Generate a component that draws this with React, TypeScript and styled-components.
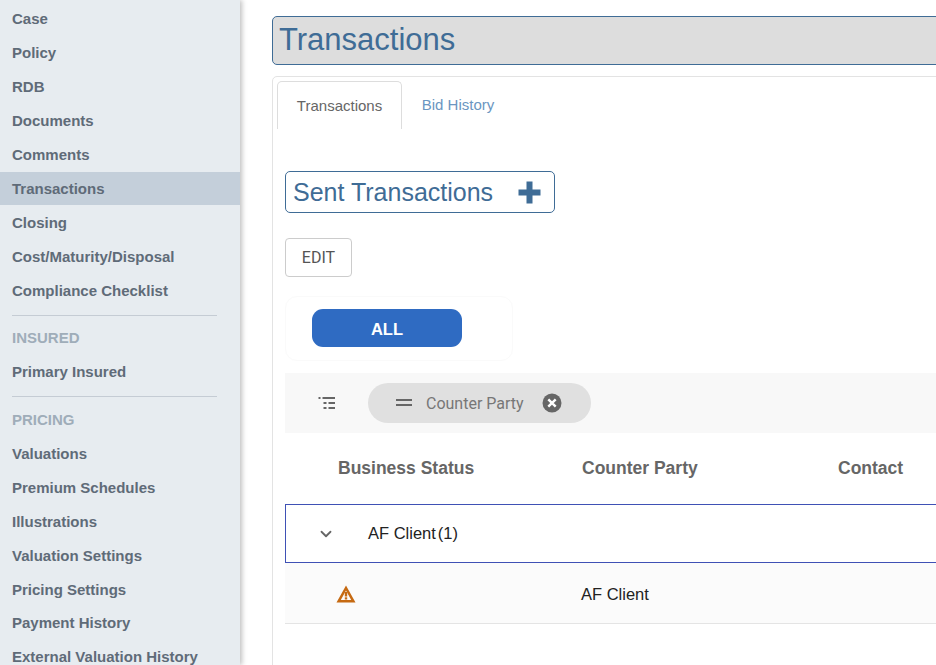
import React from "react";
import styled, { createGlobalStyle } from "styled-components";
import { ChevronDown } from "lucide-react";

const GlobalStyle = createGlobalStyle`
  html, body {
    margin: 0;
    padding: 0;
    background: white;
    font-family: "Liberation Sans", Arial, sans-serif;
  }
`;

const Page = styled.div`
  display: flex;
  width: 936px;
  height: 665px;
  overflow: hidden;
  background: white;
`;

const Sidebar = styled.nav`
  flex: 0 0 240px;
  height: 665px;
  padding-top: 2px;
  box-sizing: border-box;
  overflow: hidden;
  background: #e7ecf0;
  box-shadow: 2px 0 5px rgba(0, 0, 0, 0.25);
  position: relative;
  z-index: 1;
`;

const NavItem = styled.div<{ $active?: boolean; $h?: number }>`
  height: ${({ $active, $h }) => ($active ? 33 : $h || 34)}px;
  margin-bottom: ${({ $active }) => ($active ? 1 : 0)}px;
  line-height: 33px;
  padding-left: 12px;
  font-size: 15px;
  font-weight: 700;
  color: #5f6b78;
  background: ${({ $active }) => ($active ? "#c4cfda" : "transparent")};
`;

const NavDivider = styled.hr<{ $after: number }>`
  border: 0;
  height: 1px;
  background: #c5ccd4;
  margin: 7px 23px ${({ $after }) => $after}px 12px;
`;

const NavSection = styled.div`
  height: 34px;
  line-height: 33px;
  padding-left: 12px;
  font-size: 15px;
  font-weight: 700;
  color: #9fadb9;
`;

const Main = styled.main`
  flex: 0 0 760px;
  padding: 16px 0 0 32px;
  box-sizing: border-box;
`;

const TitleBar = styled.h1`
  margin: 0 0 11px;
  height: 49px;
  line-height: 46px;
  box-sizing: border-box;
  padding-left: 6px;
  font-size: 31px;
  font-weight: 400;
  color: #3f6c96;
  background: #dddddd;
  border: 1px solid #3f6c96;
  border-radius: 5px;
`;

const Card = styled.section`
  height: 600px;
  box-sizing: border-box;
  padding: 4px 0 0 4px;
  border: 1px solid #e3e3e3;
  border-radius: 5px 5px 0 0;
`;

const Tabs = styled.div`
  display: flex;
  width: 237px;
  height: 48px;
  box-sizing: border-box;
  border-bottom: 1px solid #dddddd;
`;

const Tab = styled.div<{ $active?: boolean }>`
  height: 48px;
  box-sizing: border-box;
  line-height: 47px;
  font-size: 15px;
  text-align: center;
  width: ${({ $active }) => ($active ? "125px" : "112px")};
  color: ${({ $active }) => ($active ? "#666666" : "#6b96c1")};
  background: white;
  border: ${({ $active }) => ($active ? "1px solid #dddddd" : "0")};
  border-bottom: 0;
  border-radius: 5px 5px 0 0;
`;

const Body = styled.div`
  padding: 42px 0 0 8px;
`;

const SentBox = styled.div`
  display: flex;
  align-items: center;
  justify-content: space-between;
  width: 270px;
  height: 42px;
  box-sizing: border-box;
  padding: 0 13px 0 7px;
  border: 1px solid #3f6c96;
  border-radius: 5px;
  font-size: 25px;
  line-height: 38px;
  color: #3f6c96;
`;

const EditButton = styled.button`
  display: block;
  width: 67px;
  height: 39px;
  margin: 25px 0 19px;
  padding: 0;
  font-family: Roboto, sans-serif;
  font-size: 16px;
  color: #555555;
  background: white;
  border: 1px solid #cccccc;
  border-radius: 4px;
`;

const FilterBox = styled.div`
  width: 228px;
  height: 65px;
  box-sizing: border-box;
  padding: 12px 0 0 26px;
  border: 1px solid #fafafa;
  border-radius: 12px;
`;

const AllButton = styled.div`
  width: 150px;
  height: 38px;
  line-height: 40px;
  text-align: center;
  font-size: 16.5px;
  font-weight: 700;
  color: white;
  background: #2f6bc2;
  border-radius: 11px;
`;

const GroupBar = styled.div`
  display: flex;
  align-items: center;
  height: 60px;
  margin-top: 12px;
  padding-left: 33px;
  background: #f8f8f8;
`;

const Chip = styled.div`
  display: flex;
  align-items: center;
  width: 223px;
  height: 40px;
  box-sizing: border-box;
  margin-left: 32px;
  padding-left: 28px;
  background: #e0e0e0;
  border-radius: 20px;
  font-family: Roboto, sans-serif;
  font-size: 16px;
  color: #777777;
`;

const ChipLabel = styled.span`
  margin: 0 18px 0 14px;
`;

const HeaderRow = styled.div`
  display: grid;
  grid-template-columns: 244px 256px 1fr;
  height: 71px;
  line-height: 70px;
  padding-left: 53px;
  font-size: 17.5px;
  font-weight: 700;
  color: #666666;
`;

const GroupRow = styled.div`
  display: flex;
  align-items: center;
  height: 59px;
  box-sizing: border-box;
  padding-left: 31px;
  border: 1px solid #3f51b5;
  border-right: 0;
  font-size: 16.5px;
  color: #222222;
`;

const GroupLabel = styled.span`
  margin-left: 33px;
`;

const GroupCount = styled.span`
  margin-left: 2px;
`;

const DataRow = styled.div`
  display: grid;
  grid-template-columns: 245px 1fr;
  align-items: center;
  height: 61px;
  box-sizing: border-box;
  padding-left: 51px;
  background: #fbfbfb;
  border-bottom: 1px solid #e4e4e4;
  font-size: 16.5px;
  line-height: 62px;
  color: #222222;
`;

const IconCell = styled.span`
  display: flex;
  align-items: center;
`;

const PlusIcon = () => (
  <svg width="23" height="23" viewBox="0 0 23 23">
    <path d="M8.5 0.5h6v8h8v6h-8v8h-6v-8h-8v-6h8z" fill="#3f6c96" />
  </svg>
);

const ListIcon = () => (
  <svg width="18" height="16" viewBox="0 0 18 16">
    <rect x="0.5" y="2" width="2" height="2" fill="#666" />
    <rect x="4.5" y="2" width="12.5" height="2" fill="#666" />
    <rect x="5.5" y="7" width="3" height="2" fill="#666" />
    <rect x="10.5" y="7" width="6.5" height="2" fill="#666" />
    <rect x="5.5" y="12" width="3" height="2" fill="#666" />
    <rect x="10.5" y="12" width="6.5" height="2" fill="#666" />
  </svg>
);

const DragIcon = () => (
  <svg width="16" height="8" viewBox="0 0 16 8">
    <rect y="0" width="16" height="2" fill="#666666" />
    <rect y="5" width="16" height="2" fill="#666666" />
  </svg>
);

const CloseIcon = () => (
  <svg width="20" height="20" viewBox="0 0 20 20">
    <circle cx="10" cy="10" r="9.5" fill="#666666" />
    <path d="M6.3 6.3l7.4 7.4M13.7 6.3l-7.4 7.4" stroke="white" strokeWidth="2.4" />
  </svg>
);

const WarningIcon = () => (
  <svg width="20" height="18" viewBox="0 0 20 18">
    <path
      fillRule="evenodd"
      d="M10 0.5L19.5 17.5H0.5ZM10 5.5L4.8 15H15.2Z"
      fill="#c66a12"
    />
    <rect x="8.8" y="7" width="2.4" height="4.5" fill="#c66a12" />
    <rect x="8.8" y="12.3" width="2.4" height="2.2" fill="#c66a12" />
  </svg>
);

const topItems = ["Case", "Policy", "RDB", "Documents", "Comments"];
const midItems = ["Closing", "Cost/Maturity/Disposal", "Compliance Checklist"];
const pricingItems = ["Valuations", "Premium Schedules", "Illustrations"];
const lastItems = ["Valuation Settings", "Pricing Settings", "Payment History", "External Valuation History"];

export default function App() {
  return (
    <Page>
      <GlobalStyle />
      <Sidebar>
        {topItems.map((item) => (
          <NavItem key={item}>{item}</NavItem>
        ))}
        <NavItem $active>Transactions</NavItem>
        {midItems.map((item) => (
          <NavItem key={item}>{item}</NavItem>
        ))}
        <NavDivider $after={5} />
        <NavSection>INSURED</NavSection>
        <NavItem>Primary Insured</NavItem>
        <NavDivider $after={6} />
        <NavSection>PRICING</NavSection>
        {pricingItems.map((item) => (
          <NavItem key={item}>{item}</NavItem>
        ))}
        {lastItems.map((item) => (
          <NavItem key={item} $h={33.7}>
            {item}
          </NavItem>
        ))}
      </Sidebar>
      <Main>
        <TitleBar>Transactions</TitleBar>
        <Card>
          <Tabs>
            <Tab $active>Transactions</Tab>
            <Tab>Bid History</Tab>
          </Tabs>
          <Body>
            <SentBox>
              Sent Transactions
              <PlusIcon />
            </SentBox>
            <EditButton>EDIT</EditButton>
            <FilterBox>
              <AllButton>ALL</AllButton>
            </FilterBox>
            <GroupBar>
              <ListIcon />
              <Chip>
                <DragIcon />
                <ChipLabel>Counter Party</ChipLabel>
                <CloseIcon />
              </Chip>
            </GroupBar>
            <HeaderRow>
              <span>Business Status</span>
              <span>Counter Party</span>
              <span>Contact</span>
            </HeaderRow>
            <GroupRow>
              <ChevronDown size={18} color="#666666" strokeWidth={2.4} />
              <GroupLabel>AF Client</GroupLabel>
              <GroupCount>(1)</GroupCount>
            </GroupRow>
            <DataRow>
              <IconCell>
                <WarningIcon />
              </IconCell>
              <span>AF Client</span>
            </DataRow>
          </Body>
        </Card>
      </Main>
    </Page>
  );
}
